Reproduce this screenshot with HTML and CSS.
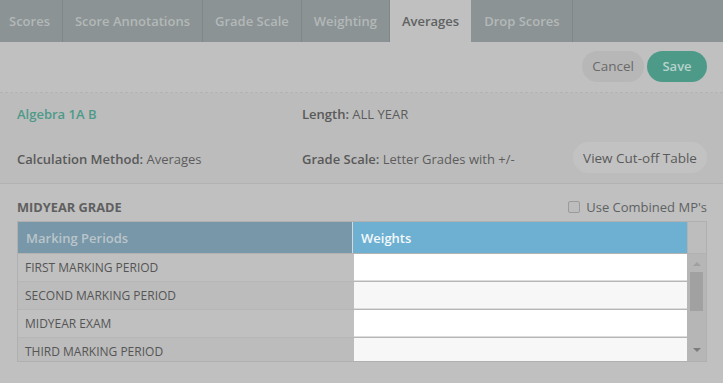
FILE: index.html
```html
<!DOCTYPE html>
<html>
<head>
<meta charset="utf-8">
<link rel="stylesheet" href="styles.css">
</head>
<body>
<div class="page">
  <nav class="tabs">
    <div class="tab">Scores</div>
    <div class="tab">Score Annotations</div>
    <div class="tab">Grade Scale</div>
    <div class="tab">Weighting</div>
    <div class="tab active">Averages</div>
    <div class="tab">Drop Scores</div>
  </nav>
  <div class="toolbar">
    <button class="btn btn-cancel">Cancel</button>
    <button class="btn btn-save">Save</button>
  </div>
  <div class="info">
    <div class="info-row">
      <div class="cell-left course">Algebra 1A B</div>
      <div class="cell-right"><b>Length:</b> ALL YEAR</div>
    </div>
    <div class="info-row">
      <div class="cell-left"><b>Calculation Method:</b> Averages</div>
      <div class="cell-right"><b>Grade Scale:</b> Letter Grades with +/-</div>
      <button class="btn btn-cutoff">View Cut-off Table</button>
    </div>
  </div>
  <div class="section">
    <div class="section-head">
      <div class="section-title">MIDYEAR GRADE</div>
      <label class="combined"><span class="checkbox"></span>Use Combined MP's</label>
    </div>
    <div class="grid">
      <div class="grid-head">
        <div class="th th-mp">Marking Periods</div>
        <div class="th th-w">Weights</div>
        <div class="th-gutter"></div>
      </div>
      <div class="grid-body">
        <div class="rows">
          <div class="row"><div class="td-mp">FIRST MARKING PERIOD</div><div class="td-w"></div></div>
          <div class="row alt"><div class="td-mp">SECOND MARKING PERIOD</div><div class="td-w"></div></div>
          <div class="row"><div class="td-mp">MIDYEAR EXAM</div><div class="td-w"></div></div>
          <div class="row alt last"><div class="td-mp">THIRD MARKING PERIOD</div><div class="td-w"></div></div>
        </div>
        <div class="scrollbar">
          <span class="arrow up"></span>
          <span class="thumb"></span>
          <span class="arrow down"></span>
        </div>
      </div>
    </div>
  </div>
</div>
</body>
</html>
```

FILE: styles.css
```css
* { box-sizing: border-box; }
html, body { margin: 0; padding: 0; }
body {
  width: 723px;
  height: 383px;
  overflow: hidden;
  background: #c0c0c0;
  font-family: "Open Sans", "Liberation Sans", sans-serif;
  font-size: 13px;
  color: #5c5c5c;
}
.page { width: 723px; }

.tabs {
  display: flex;
  height: 42px;
  background: #8b9394;
}
.tab {
  display: flex;
  align-items: center;
  padding: 0 12px 0 9px;
  border-right: 1px solid #7f8788;
  font-weight: 600;
  font-size: 13px;
  color: #b3b8b8;
}
.tab + .tab { padding-left: 12px; }
.tab.active {
  background: #c0c0c0;
  color: #5f6263;
  border-right-color: #8b9394;
}

.toolbar {
  height: 51px;
  display: flex;
  justify-content: flex-end;
  align-items: center;
  gap: 3px;
  padding: 0 16px 2px 0;
  border-bottom: 1px dashed #b3b3b3;
}
.btn {
  font-family: "Open Sans", "Liberation Sans", sans-serif;
  font-size: 13px;
  font-weight: 600;
  border: none;
  border-radius: 16px;
  height: 31px;
  padding: 0 12px;
  cursor: pointer;
}
.btn-cancel {
  background: #b7b7b7;
  color: #6a6a6a;
  width: 62px;
  padding: 0;
  font-weight: 400;
  font-size: 13.5px;
}
.btn-save {
  background: #4e9a89;
  color: #b6d3cc;
  width: 60px;
  padding: 0;
}

.info {
  background: #bcbcbc;
  padding: 0 16px 0 17px;
  height: 91px;
  border-bottom: 1px solid #b2b2b2;
}
.info-row {
  display: flex;
  align-items: center;
  height: 42px;
}
.info-row + .info-row { height: 48px; }
.cell-left { width: 285px; }
.cell-right { flex: 1; }
.info b { font-weight: 600; color: #595959; }
.course { font-weight: 600; color: #4e9a89; }
.btn-cutoff {
  background: #c2c2c2;
  color: #5a5a5a;
  font-weight: 400;
  font-size: 13.5px;
  width: 134px;
  padding: 0;
  height: 31px;
  margin-top: -3px;
}

.section { padding: 14px 16px 0 17px; }
.section-head {
  display: flex;
  justify-content: space-between;
  align-items: center;
  height: 17px;
  margin-bottom: 6px;
}
.section-title {
  font-weight: 700;
  font-size: 12.8px;
  color: #5f5f5f;
}
.combined {
  display: flex;
  align-items: center;
  font-size: 13px;
  color: #5f6263;
}
.checkbox {
  width: 12px;
  height: 12px;
  border: 1px solid #9a9a9a;
  border-radius: 2px;
  background: #bdbdbd;
  margin-right: 6px;
}

.grid {
  border: 1px solid #b0b0b0;
  width: 690px;
}
.grid-head {
  display: flex;
  height: 32px;
  border-bottom: 1px solid #b2b2b2;
}
.th {
  display: flex;
  align-items: center;
  font-weight: 600;
  font-size: 13px;
}
.th-mp {
  width: 335px;
  background: #7897a8;
  color: #bac5cb;
  padding-left: 8px;
  border-right: 1px solid #d8d8d8;
}
.th-w {
  width: 334px;
  background: #6eb0d1;
  color: #f3f8fb;
  padding-left: 8px;
}
.th-gutter { flex: 1; background: #bdbdbd; border-left: 1px solid #b2b2b2; }

.grid-body {
  display: flex;
  height: 107px;
}
.rows {
  width: 669px;
  overflow: hidden;
}
.row {
  display: flex;
  height: 28px;
  border-bottom: 1px solid #b6b6b6;
}
.row.last { height: 23px; border-bottom: 0; }
.td-mp {
  width: 336px;
  display: flex;
  align-items: center;
  padding-left: 7px;
  font-size: 12px;
  color: #555555;
  background: #c0c0c0;
}
.row.last .td-mp { align-items: flex-start; padding-top: 5px; }
.td-w {
  flex: 1;
  background: #ffffff;
}
.row .td-w { box-shadow: inset 0 -1px 0 #dcdcdc; }
.row.last .td-w { box-shadow: none; }
.row.alt .td-mp { background: #bcbcbc; }
.row.alt .td-w { background: #f7f7f7; }

.scrollbar {
  flex: 1;
  position: relative;
  background: #b6b6b6;
}
.thumb {
  position: absolute;
  left: 3px;
  top: 18px;
  width: 13px;
  height: 39px;
  background: #a1a1a1;
}
.arrow {
  position: absolute;
  left: 6px;
  width: 0;
  height: 0;
  border-left: 4px solid transparent;
  border-right: 4px solid transparent;
}
.arrow.up { top: 8px; border-bottom: 4px solid #a0a0a0; }
.arrow.down { bottom: 9px; border-top: 4px solid #7c7c7c; }
```
